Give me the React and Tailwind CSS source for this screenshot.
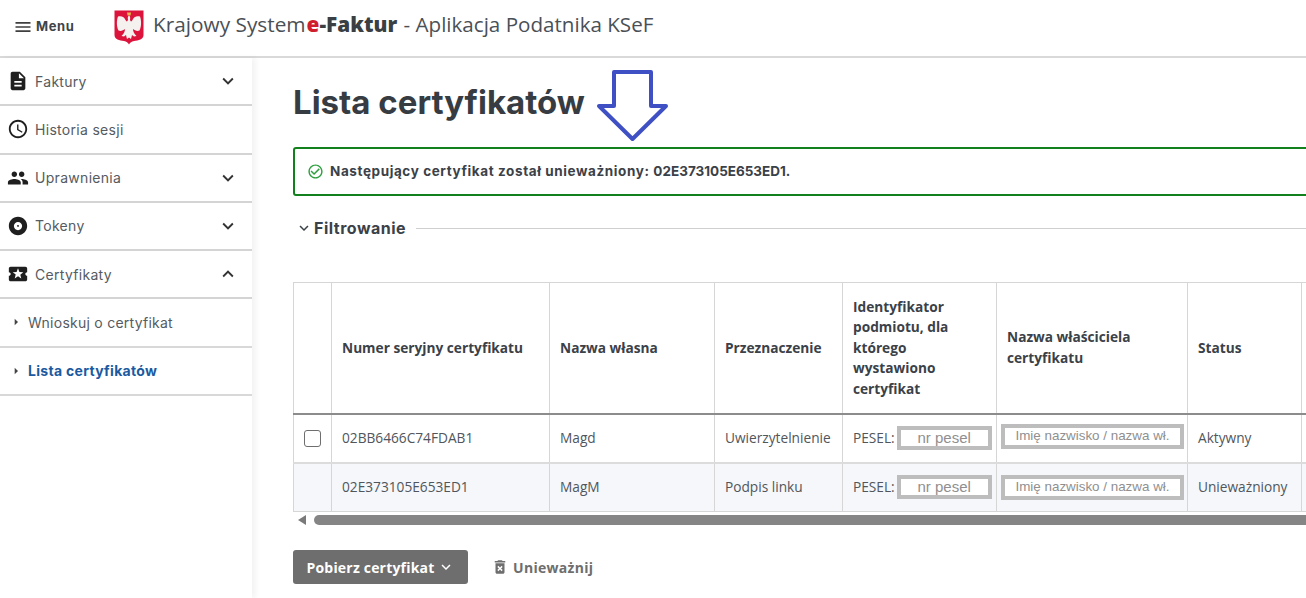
import React from "react";
import {
  MdMenu,
  MdDescription,
  MdAccessTime,
  MdPeople,
  MdAlbum,
  MdLocalActivity,
  MdKeyboardArrowDown,
  MdKeyboardArrowUp,
  MdCheckCircleOutline,
  MdDeleteForever,
  MdArrowRight,
} from "react-icons/md";

const NAV = [
  { label: "Faktury", icon: <MdDescription />, arrow: "down" },
  { label: "Historia sesji", icon: <MdAccessTime /> },
  { label: "Uprawnienia", icon: <MdPeople />, arrow: "down" },
  { label: "Tokeny", icon: <MdAlbum />, arrow: "down" },
  { label: "Certyfikaty", icon: <MdLocalActivity />, arrow: "up" },
];

const Emblem = () => (
  <svg width="30" height="35" viewBox="0 0 30 35">
    <path d="M0.5 0.5H29.5V25C29.5 29.500 24.500 30.500 20 31C17.500 31.500 16 32.500 15 34.500C14 32.500 12.500 31.500 10 31C5.500 30.500 0.5 29.500 0.5 25Z" fill="#dc143c" />
    <path d="M15 5.500C13.800 6.500 13.500 7.500 14 9.500C13.500 12 12.500 12 11.500 10C10.500 7 7.500 5.500 4 6.500C2.500 10 2.500 17 4.500 20.500C7 21.500 9 20.500 11 19C11 21.500 10 23.500 7.500 26L10 26.500L12 25L13 29L15 27.500L17 29L18 25L20 26.500L22.500 26C20 23.500 19 21.500 19 19C21 20.500 23 21.500 25.500 20.500C27.500 17 27.500 10 26 6.500C22.500 5.500 19.500 7 18.500 10C17.500 12 16.500 12 16 9.500C16.500 7.500 16.200 6.500 15 5.500Z" fill="#f4f1ef" />
    <path d="M13 2.500H17L16.500 5.500H13.500Z" fill="#e8b84a" />
  </svg>
);

const NavItem = ({ item }) => (
  <div className="flex h-[48.250px] items-center border-b-2 border-[#d4d4d4] pl-[7px] pr-[13px]">
    <span className="flex w-[22px] justify-center text-[22px] text-[#1f1f1f]">{item.icon}</span>
    <span className="ml-[6px] flex-1 text-[14px] tracking-[0.3px] text-[#555b61]">{item.label}</span>
    {item.arrow === "down" && <MdKeyboardArrowDown className="text-[22px] text-[#333]" />}
    {item.arrow === "up" && <MdKeyboardArrowUp className="text-[22px] text-[#333]" />}
  </div>
);

const SubItem = ({ label, active }) => (
  <div className="flex h-[48.250px] items-center border-b-2 border-[#d8d8d8] pl-[8px]">
    <MdArrowRight className="text-[16px] text-[#444]" />
    <span
      className={
        active
          ? "ml-[4px] text-[14px] font-bold tracking-[0.3px] text-[#1b5aa0]"
          : "ml-[4px] text-[14px] tracking-[0.25px] text-[#555b61]"
      }
    >
      {label}
    </span>
  </div>
);

const Masked = ({ text, w, h, size, lift }) => (
  <span
    className={`inline-flex shrink-0 items-center justify-center border-[4px] border-[#bdbdbd] bg-white font-['Liberation_Sans',sans-serif] text-[#8f8f8f] ${w} ${h} ${size} ${lift}`}
  >
    {text}
  </span>
);

const HEAD_TD = "border-x border-[#d6d6d6] px-[10px] text-[13.700px] font-bold leading-[20.500px] text-[#3b4148]";
const TD = "border-x border-[#d6d6d6] px-[10px] text-[13.700px] text-[#50565c]";

const Row = ({ bg, serial, name, use, status, check, border, lift }) => (
  <tr className={`h-[49px] ${bg} ${border}`}>
    <td className={TD}>
      {check && <div className="h-[17px] w-[17px] rounded-[3px] border border-[#6e6e6e] bg-white" />}
    </td>
    <td className={TD}>{serial}</td>
    <td className={TD}>{name}</td>
    <td className={TD}>{use}</td>
    <td className={`${TD} !pr-0`}>
      <div className="flex items-center gap-[2px]">
        <span>PESEL:</span>
        <Masked text="nr pesel" w="w-[95px]" h="h-[24px]" size="text-[15px]" />
      </div>
    </td>
    <td className={`${TD} !px-[4px]`}>
      <Masked text="Imię nazwisko / nazwa wł." w="w-[183px]" h="h-[25px]" size="text-[13.400px]" lift={lift} />
    </td>
    <td className={TD}>{status}</td>
    <td className={TD}></td>
  </tr>
);

const App = () => {
  return (
    <div className="relative h-[598px] w-[1306px] overflow-hidden bg-white font-['Open_Sans',sans-serif]">
      <header className="flex h-[58px] items-center border-b-2 border-[#d9d9d9]">
        <div className="ml-[13px] flex w-[101px] items-center pb-[3px]">
          <MdMenu className="text-[20px] text-[#3f3f3f]" />
          <span className="ml-[3px] font-['Inter',sans-serif] text-[13px] font-bold tracking-[0.6px] text-[#3f4448]">
            Menu
          </span>
        </div>
        <div className="pb-[1px]">
          <Emblem />
        </div>
        <div className="ml-[9px] flex items-baseline whitespace-pre pb-[6px] text-[20.800px] text-[#4a5056]">
          <span>Krajowy System</span>
          <span className="ml-[1px] font-extrabold text-[#3a3f44]">
            <span className="text-[#cf1f2e]">e</span>-Faktur
          </span>
          <span className="ml-[1px] text-[20.600px]"> - Aplikacja Podatnika KSeF</span>
        </div>
      </header>

      <div className="flex">
        <aside className="h-[540px] w-[252px] shrink-0 font-['Inter',sans-serif] shadow-[4px_0_6px_rgba(0,0,0,0.05)]">
          {NAV.map((item) => (
            <NavItem key={item.label} item={item} />
          ))}
          <SubItem label="Wnioskuj o certyfikat" />
          <SubItem label="Lista certyfikatów" active />
        </aside>

        <main className="min-w-0 flex-1 pl-[41px]">
          <h1 className="mt-[24px] font-['Inter',sans-serif] text-[33px] leading-[40px] font-bold text-[#373c42]">
            Lista certyfikatów
          </h1>

          <div className="mt-[25px] flex h-[49px] w-[1040px] items-center rounded-[3px] border-2 border-[#12801c] pl-[12px]">
            <MdCheckCircleOutline className="text-[17px] text-[#2e9e3e]" />
            <span className="ml-[6px] font-['Inter',sans-serif] text-[13.500px] font-bold tracking-[0.6px] text-[#3b4148]">
              Następujący certyfikat został unieważniony:{" "}
              <span className="tracking-[0px]">02E373105E653ED1.</span>
            </span>
          </div>

          <div className="mt-[19px] flex h-[26px] items-center">
            <MdKeyboardArrowDown className="ml-[2px] text-[18px] text-[#3b4148]" />
            <span className="ml-[1px] font-['Inter',sans-serif] text-[16px] font-bold tracking-[0.5px] text-[#3b4148]">
              Filtrowanie
            </span>
            <div className="ml-[10px] h-px flex-1 bg-[#cfcfcf]" />
          </div>

          <table className="mt-[41px] w-[1039px] table-fixed border-collapse border border-[#d6d6d6]">
            <colgroup>
              <col className="w-[38px]" />
              <col className="w-[218px]" />
              <col className="w-[165px]" />
              <col className="w-[128px]" />
              <col className="w-[154px]" />
              <col className="w-[191px]" />
              <col className="w-[114px]" />
              <col />
            </colgroup>
            <thead>
              <tr className="h-[131px] border-b-2 border-[#8c8c8c] text-left">
                <td className={HEAD_TD}></td>
                <td className={HEAD_TD}>Numer seryjny certyfikatu</td>
                <td className={HEAD_TD}>Nazwa własna</td>
                <td className={HEAD_TD}>Przeznaczenie</td>
                <td className={HEAD_TD}>Identyfikator podmiotu, dla którego wystawiono certyfikat</td>
                <td className={HEAD_TD}>Nazwa właściciela certyfikatu</td>
                <td className={HEAD_TD}>Status</td>
                <td className={HEAD_TD}></td>
              </tr>
            </thead>
            <tbody>
              <Row
                check
                bg="bg-white"
                border="border-b-2 border-[#dcdcdc]"
                serial="02BB6466C74FDAB1"
                name="Magd"
                use="Uwierzytelnienie"
                status="Aktywny"
                lift="mb-[3px]"
              />
              <Row bg="bg-[#f5f7fa]" border="" serial="02E373105E653ED1" name="MagM" use="Podpis linku" status="Unieważniony" lift="" />
            </tbody>
          </table>

          <div className="mt-[3px] flex h-[10px] items-center">
            <div className="ml-[5px] h-0 w-0 border-y-[5px] border-r-[8px] border-y-transparent border-r-[#7a7a7a]" />
            <div className="ml-[8px] h-[10px] flex-1 rounded-l-full bg-[#858585]" />
          </div>

          <div className="mt-[25px] flex items-center">
            <button className="flex h-[34px] w-[175px] items-center justify-center rounded-[3px] bg-[#6e6e6e] text-[14px] font-bold tracking-[0.2px] text-white">
              Pobierz certyfikat
              <MdKeyboardArrowDown className="ml-[2px] text-[18px]" />
            </button>
            <MdDeleteForever className="ml-[23px] text-[18px] text-[#6e6e6e]" />
            <span className="ml-[4px] text-[14px] font-bold tracking-[0.3px] text-[#6e6e6e]">Unieważnij</span>
          </div>
        </main>
      </div>

      <svg className="absolute left-[596px] top-[70px]" width="72" height="72" viewBox="0 0 72 72">
        <path d="M18 2H55V36H70L36.500 69L3 36H18Z" fill="none" stroke="#3f4fc4" strokeWidth="4" strokeLinejoin="round" />
      </svg>
    </div>
  );
};

export default App;
